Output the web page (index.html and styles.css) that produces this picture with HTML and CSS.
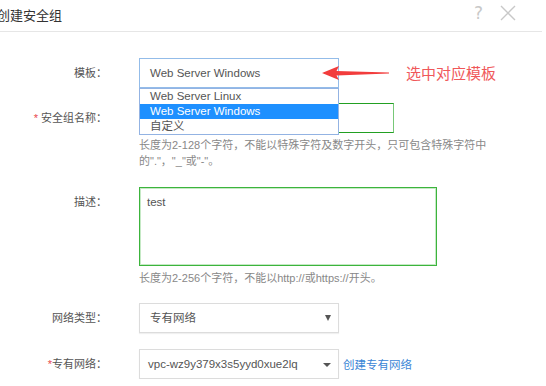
FILE: index.html
```html
<!DOCTYPE html>
<html lang="zh-CN">
<head>
    <meta charset="UTF-8">
    <meta name="viewport" content="width=device-width, initial-scale=1.0">
    <title>创建安全组</title>
    <link rel="stylesheet" href="styles.css">
</head>
<body>
    <div class="dialog">
        <div class="dialog-header">
            <span class="dialog-title">创建安全组</span>
            <span class="dialog-tools">
                <span class="help">?</span>
                <svg class="close" width="16" height="16" viewBox="0 0 16 16">
                    <path d="M1 1 L15 15 M15 1 L1 15" stroke="#c8c8c8" stroke-width="1.4" fill="none"/>
                </svg>
            </span>
        </div>

        <div class="form">
            <!-- 模板 -->
            <div class="form-row">
                <label class="form-label">模板：</label>
                <div class="form-control">
                    <div class="select select-open">Web Server Windows</div>
                    <ul class="select-menu">
                        <li>Web Server Linux</li>
                        <li class="active">Web Server Windows</li>
                        <li>自定义</li>
                    </ul>
                    <div class="callout">
                        <svg class="callout-arrow" width="68" height="16" viewBox="0 0 68 16">
                            <path d="M0 8 L17 1 L14.5 6 L67 7.4 L67 8.6 L14.5 10.5 L17 15 Z" fill="#f23c3c"/>
                        </svg>
                        <span class="callout-text">选中对应模板</span>
                    </div>
                </div>
            </div>

            <!-- 安全组名称 -->
            <div class="form-row row-name">
                <label class="form-label"><span class="required">*</span> 安全组名称：</label>
                <div class="form-control">
                    <div class="input input-ok"></div>
                    <p class="help-text">长度为2-128个字符，不能以特殊字符及数字开头，只可包含特殊字符中<br>的"."，"_"或"-"。</p>
                </div>
            </div>

            <!-- 描述 -->
            <div class="form-row row-desc">
                <label class="form-label">描述：</label>
                <div class="form-control">
                    <div class="textarea">test</div>
                    <p class="help-text">长度为2-256个字符，不能以http://或https://开头。</p>
                </div>
            </div>

            <!-- 网络类型 -->
            <div class="form-row row-net">
                <label class="form-label">网络类型：</label>
                <div class="form-control">
                    <div class="select select-plain">
                        <span>专有网络</span>
                        <span class="caret"></span>
                    </div>
                </div>
            </div>

            <!-- 专有网络 -->
            <div class="form-row row-vpc">
                <label class="form-label"><span class="required">*</span>专有网络：</label>
                <div class="form-control inline">
                    <div class="select select-plain vpc">
                        <span>vpc-wz9y379x3s5yyd0xue2lq</span>
                        <span class="caret caret-flat"></span>
                    </div>
                    <a class="link" href="#">创建专有网络</a>
                </div>
            </div>
        </div>
    </div>
</body>
</html>
```

FILE: styles.css
```css
body {
    margin: 0;
    font-family: 'Liberation Sans', 'Noto Sans CJK SC', sans-serif;
    font-size: 11px;
    color: #555;
    background: #fff;
}

.dialog {
    width: 546px;
}

.dialog-header {
    height: 32px;
    width: 542px;
    border-bottom: 1px solid #e6e6e6;
    display: flex;
    justify-content: space-between;
    align-items: center;
    box-sizing: border-box;
}

.dialog-title {
    margin-left: -3px;
    font-size: 13px;
    color: #333;
    margin-top: -3px;
}

.dialog-tools {
    display: flex;
    align-items: center;
    gap: 17px;
    margin-right: 26px;
    margin-top: -5px;
}

.help {
    font-family: 'DejaVu Sans', sans-serif;
    font-size: 17px;
    color: #c8c8c8;
    line-height: 1;
}

.form {
    padding-top: 26px;
}

.form-row {
    display: flex;
    align-items: flex-start;
}

.form-label {
    width: 107px;
    text-align: right;
    line-height: 30px;
    color: #555;
    flex-shrink: 0;
}

.required {
    color: #e8484b;
}

.form-control {
    margin-left: 32px;
    position: relative;
}

.form-control.inline {
    display: flex;
    align-items: center;
}

.select {
    width: 200px;
    height: 30px;
    box-sizing: border-box;
    line-height: 28px;
    padding-left: 10px;
    color: #555;
    background: #fff;
    font-size: 11.5px;
}

.select-open {
    border: 1px solid #93bce9;
}

.select-menu {
    position: absolute;
    left: 0;
    top: 30px;
    width: 200px;
    box-sizing: border-box;
    margin: 0;
    padding: 0;
    list-style: none;
    border: 1px solid #93b3e3;
    background: #fff;
    z-index: 2;
    font-size: 11.5px;
}

.select-menu li {
    line-height: 15px;
    height: 15px;
    padding-left: 10px;
    color: #555;
}

.select-menu li.active {
    background: #1e90ff;
    color: #fff;
}

.callout {
    position: absolute;
    left: 183px;
    top: 4px;
    display: flex;
    align-items: center;
    white-space: nowrap;
    z-index: 3;
}

.callout-text {
    margin-left: 16px;
    font-size: 15px;
    color: #f0585a;
}

.row-name {
    margin-top: 15px;
}

.input {
    width: 255px;
    height: 30px;
    box-sizing: border-box;
}

.input-ok {
    border: 1px solid #22a022;
    border-right-color: #78c878;
}

.help-text {
    margin: 4px 0 0;
    line-height: 16px;
    color: #888;
    white-space: nowrap;
}

.row-desc {
    margin-top: 18px;
}

.textarea {
    width: 298px;
    height: 79px;
    box-sizing: border-box;
    border: 1px solid #3cb43c;
    box-shadow: inset 0 0 0 1px #c5e9c5;
    padding: 8px 7px;
    color: #555;
    font-size: 11.5px;
}

.row-net {
    margin-top: 17px;
}

.row-vpc {
    margin-top: 16px;
}

.select-plain {
    border: 1px solid #dcdcdc;
    box-shadow: 0 1px 1px rgba(0, 0, 0, 0.06);
    display: flex;
    justify-content: space-between;
    align-items: center;
    padding-right: 7px;
}

.vpc {
    padding-left: 8px;
}

.caret {
    width: 0;
    height: 0;
    border-left: 3px solid transparent;
    border-right: 3px solid transparent;
    border-top: 6px solid #555;
}

.caret-flat {
    border-left-width: 4px;
    border-right-width: 4px;
    border-top-width: 4px;
    margin-top: 2px;
}

.link {
    margin-left: 4px;
    color: #3b86d6;
    text-decoration: none;
    font-size: 11.5px;
}
```
